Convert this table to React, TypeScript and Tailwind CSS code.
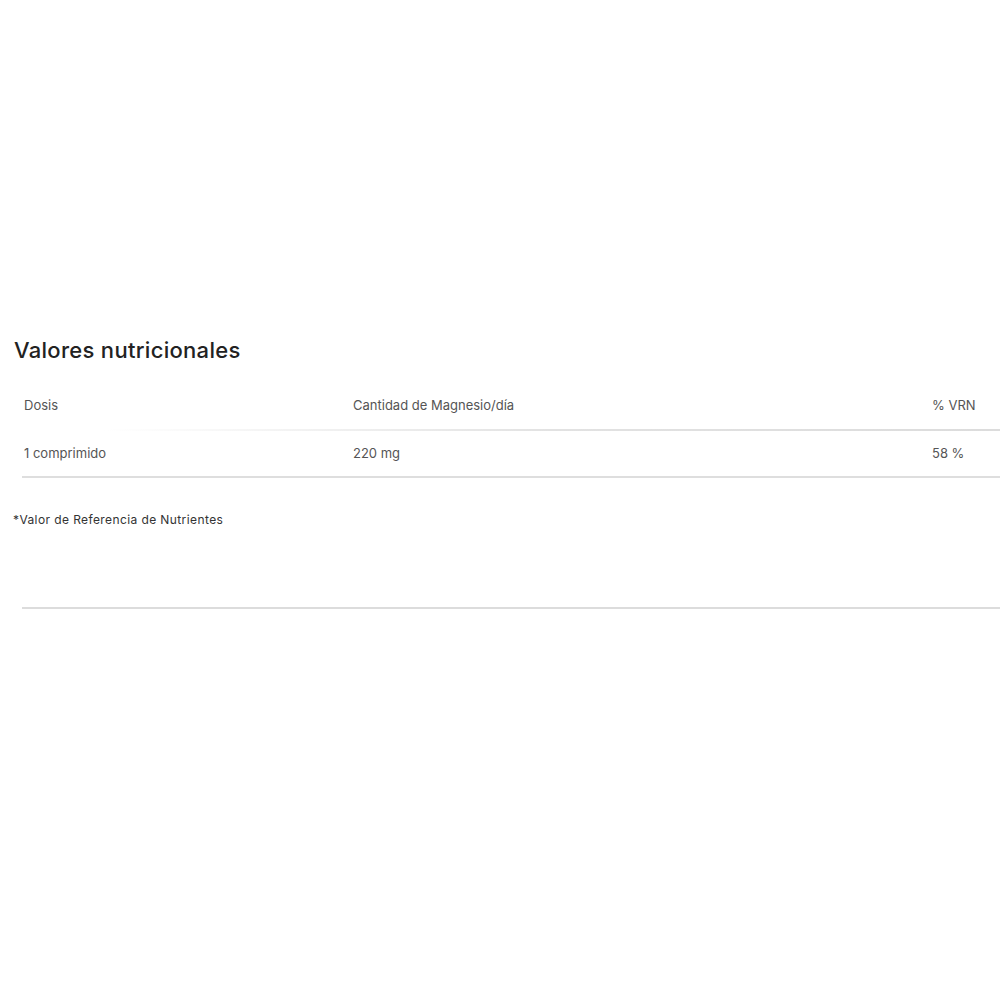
export default function App() {
  const font = { fontFamily: 'Inter, "Noto Sans", sans-serif' }
  return (
    <div className="w-[1000px] h-[1000px] bg-white overflow-hidden" style={font}>
      <div className="pt-[336px] pl-[14px]">
        <h2 className="text-[22px] leading-[28px] font-medium text-[#222] tracking-[0.3px]">
          Valores nutricionales
        </h2>

        <div className="mt-[19px] w-[986px] text-[13px] text-[#555]">
          {/* header row */}
          <div className="grid grid-cols-[329px_579px_1fr] h-[46px] items-center">
            <div className="pl-[10px]">Dosis</div>
            <div className="pl-[10px]">Cantidad de Magnesio/día</div>
            <div className="pl-[10px]">% VRN</div>
          </div>
          <div className="h-[2px] ml-[90px] bg-gradient-to-r from-white via-[#e2e2e2] to-[#dcdcdc]" />

          {/* data row */}
          <div className="grid grid-cols-[329px_579px_1fr] h-[45px] items-center">
            <div className="pl-[10px]">1 comprimido</div>
            <div className="pl-[10px]">220 mg</div>
            <div className="pl-[10px]">58 %</div>
          </div>
          <div className="h-[2px] ml-[8px] bg-[#dedede]" />
        </div>

        <p className="mt-[33px] -ml-px text-[12px] text-[#333] tracking-[0.4px]">
          *Valor de Referencia de Nutrientes
        </p>

        <div className="mt-[78px] ml-[8px] h-[2px] bg-[#dcdcdc]" />
      </div>
    </div>
  )
}
